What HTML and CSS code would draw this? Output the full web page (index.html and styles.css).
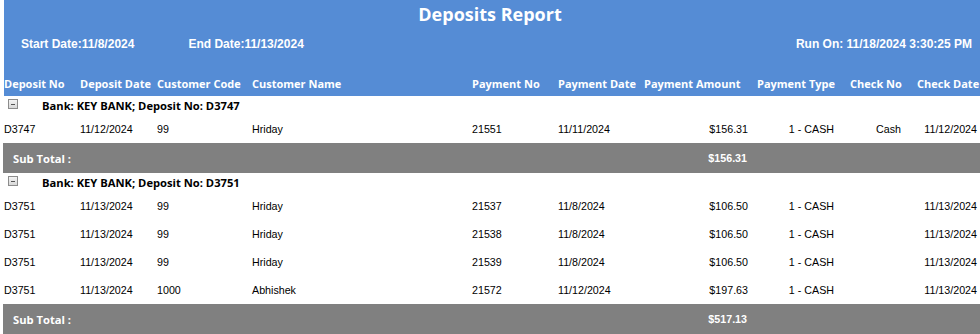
FILE: index.html
```html
<!DOCTYPE html>
<html>
<head>
<meta charset="utf-8">
<link rel="stylesheet" href="styles.css">
</head>
<body>
<div class="report">
  <header class="banner">
    <h1 class="title">Deposits Report</h1>
    <div class="meta">
      <span class="start">Start Date:11/8/2024</span>
      <span class="end">End Date:11/13/2024</span>
      <span class="run">Run On: 11/18/2024 3:30:25 PM</span>
    </div>
    <div class="cols head">
      <span>Deposit No</span>
      <span>Deposit Date</span>
      <span>Customer Code</span>
      <span>Customer Name</span>
      <span>Payment No</span>
      <span>Payment Date</span>
      <span>Payment Amount</span>
      <span class="h-type">Payment Type</span>
      <span class="h-check">Check No</span>
      <span class="h-cdate">Check Date</span>
    </div>
  </header>

  <div class="group-row"><span class="toggle"></span><span class="group-label">Bank: KEY BANK; Deposit No: D3747</span></div>
  <div class="cols row">
    <span>D3747</span><span>11/12/2024</span><span>99</span><span>Hriday</span><span>21551</span><span>11/11/2024</span><span class="amt">$156.31</span><span class="r type">1 - CASH</span><span class="r chk">Cash</span><span class="r cdate">11/12/2024</span>
  </div>
  <div class="cols subtotal">
    <span class="sub-label">Sub Total :</span><span class="amt">$156.31</span>
  </div>

  <div class="group-row"><span class="toggle"></span><span class="group-label">Bank: KEY BANK; Deposit No: D3751</span></div>
  <div class="cols row">
    <span>D3751</span><span>11/13/2024</span><span>99</span><span>Hriday</span><span>21537</span><span>11/8/2024</span><span class="amt">$106.50</span><span class="r type">1 - CASH</span><span class="r chk"></span><span class="r cdate">11/13/2024</span>
  </div>
  <div class="cols row">
    <span>D3751</span><span>11/13/2024</span><span>99</span><span>Hriday</span><span>21538</span><span>11/8/2024</span><span class="amt">$106.50</span><span class="r type">1 - CASH</span><span class="r chk"></span><span class="r cdate">11/13/2024</span>
  </div>
  <div class="cols row">
    <span>D3751</span><span>11/13/2024</span><span>99</span><span>Hriday</span><span>21539</span><span>11/8/2024</span><span class="amt">$106.50</span><span class="r type">1 - CASH</span><span class="r chk"></span><span class="r cdate">11/13/2024</span>
  </div>
  <div class="cols row">
    <span>D3751</span><span>11/13/2024</span><span>1000</span><span>Abhishek</span><span>21572</span><span>11/12/2024</span><span class="amt">$197.63</span><span class="r type">1 - CASH</span><span class="r chk"></span><span class="r cdate">11/13/2024</span>
  </div>
  <div class="cols subtotal">
    <span class="sub-label">Sub Total :</span><span class="amt">$517.13</span>
  </div>
</div>
</body>
</html>
```
FILE: styles.css
```css
html, body {
  margin: 0;
  padding: 0;
  overflow: hidden;
  background: #ffffff;
}
.report {
  width: 986px;
  margin-left: 4px;
  font-family: "Liberation Sans", Arial, sans-serif;
  font-size: 10.7px;
  color: #000;
}
.banner {
  background: #558cd5;
  color: #fff;
  height: 96px;
  display: flex;
  flex-direction: column;
}
.title {
  margin: 0;
  height: 28px;
  line-height: 28px;
  font-family: "Open Sans", sans-serif;
  font-weight: 700;
  font-size: 18px;
  text-align: center;
  padding-right: 14px;
}
.meta {
  height: 30px;
  line-height: 32px;
  display: flex;
  font-family: "Liberation Sans", Arial, sans-serif;
  font-weight: 700;
  font-size: 12px;
  padding-left: 17px;
  padding-right: 18px;
  margin-bottom: 12px;
}
.meta .end { margin-left: 54px; }
.meta .run { margin-left: auto; }
.cols {
  display: grid;
  grid-template-columns: 76px 77px 95px 220px 86px 86px 106px 95px 65px 80px;
  align-items: center;
}
.head {
  height: 26px;
  font-family: "Open Sans", sans-serif;
  font-weight: 700;
  font-size: 11px;
  white-space: nowrap;
}
.head .h-type { padding-left: 7px; }
.head .h-check { padding-left: 5px; }
.head .h-cdate { padding-left: 7px; }
.group-row {
  height: 19px;
  display: flex;
  align-items: center;
  font-family: "Open Sans", sans-serif;
  font-weight: 700;
  font-size: 11.2px;
}
.toggle {
  width: 8px;
  height: 8px;
  margin-left: 4px;
  margin-top: -3px;
  border: 1px solid #8c8c8c;
  background: linear-gradient(#f4f4f4, #d8d8d8);
  position: relative;
}
.toggle::after {
  content: "";
  position: absolute;
  left: 2px;
  right: 2px;
  top: 3.5px;
  height: 1px;
  background: #555;
}
.group-label { margin-left: 24px; }
.row {
  height: 28px;
  white-space: nowrap;
}
.row .amt, .subtotal .amt {
  text-align: right;
  padding-right: 2px;
}
.row .r { text-align: right; }
.row .type { padding-right: 11px; }
.row .chk { padding-right: 9px; }
.row .cdate { padding-right: 13px; }
.subtotal {
  height: 30px;
  background: #808080;
  color: #fff;
  margin-left: -1px;
}
.sub-label {
  grid-column: 1 / 7;
  padding-left: 10px;
  font-family: "Open Sans", sans-serif;
  font-weight: 700;
  font-size: 11.2px;
}
.subtotal .amt {
  grid-column: 7;
  font-weight: 700;
  font-size: 10.7px;
}
```
